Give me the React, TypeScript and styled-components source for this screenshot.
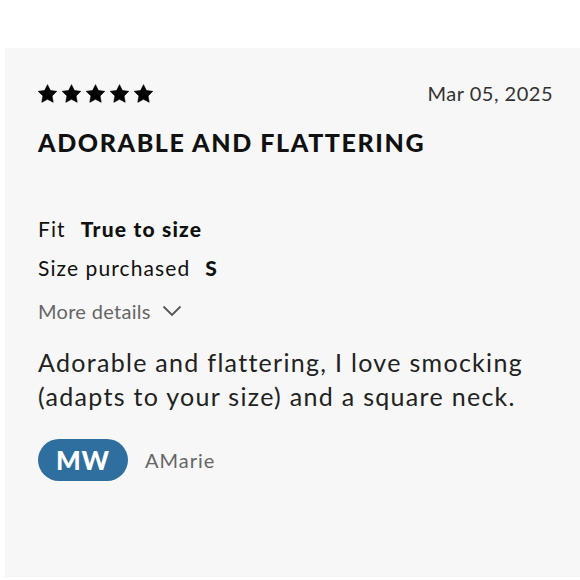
import React from "react";
import styled, { createGlobalStyle } from "styled-components";

const Global = createGlobalStyle`
  html, body { margin: 0; padding: 0; background: #ffffff; }
  body { font-family: Lato, "Open Sans", sans-serif; }
`;

const Card = styled.section`
  margin: 48px 0 0 5px;
  height: 529px;
  box-sizing: border-box;
  background: #f7f7f7;
  padding: 30px 27px 0 33px;
  display: flex;
  flex-direction: column;
`;

const TopRow = styled.div`
  display: flex;
  justify-content: space-between;
  align-items: center;
  height: 30px;
`;

const Stars = styled.div`
  display: flex;
  gap: 5px;
`;

const Date = styled.span`
  font-size: 20px;
  color: #333;
  letter-spacing: 0.5px;
`;

const Title = styled.h2`
  margin: 18px 0 0;
  font-size: 25px;
  font-weight: 900;
  letter-spacing: 1.6px;
  color: #111;
  line-height: 32px;
`;

const Details = styled.div`
  margin-top: 56px;
  display: flex;
  flex-direction: column;
  gap: 10px;
`;

const DetailRow = styled.div`
  display: flex;
  align-items: baseline;
  gap: 15px;
  font-size: 21px;
  color: #111;
  line-height: 29px;
  letter-spacing: 1.1px;
`;

const Value = styled.b`
  font-weight: 900;
  letter-spacing: 1.2px;
`;

const More = styled.button`
  margin-top: 15px;
  display: flex;
  align-items: center;
  gap: 11px;
  padding: 0;
  border: none;
  background: none;
  font-family: inherit;
  font-size: 20px;
  letter-spacing: 0.3px;
  color: #666;
  line-height: 28px;
  cursor: pointer;
`;

const Body = styled.p`
  margin: 20px 0 0;
  font-size: 25px;
  line-height: 34px;
  color: #222;
  letter-spacing: 1.3px;
`;

const Author = styled.div`
  margin-top: 26px;
  display: flex;
  align-items: center;
  gap: 17px;
`;

const Badge = styled.span`
  width: 90px;
  height: 42px;
  border-radius: 21px;
  background: #2f6f9f;
  color: #fff;
  display: flex;
  align-items: center;
  justify-content: center;
  font-size: 26px;
  font-weight: 900;
  letter-spacing: 1px;
`;

const Name = styled.span`
  font-size: 20px;
  color: #666;
  letter-spacing: 1px;
`;

const Star = () => (
  <svg width="19" height="19" viewBox="0 0 24 24">
    <path
      d="M12 .8l3.6 7.4 8.1 1.1-5.9 5.7 1.4 8.1L12 19.3l-7.2 3.8 1.4-8.1L.3 9.3l8.1-1.1z"
      fill="#000"
      stroke="#000"
      strokeWidth="0.8"
      strokeLinejoin="round"
    />
  </svg>
);

export default function App() {
  return (
    <>
      <Global />
      <Card>
        <TopRow>
          <Stars>
            {[0, 1, 2, 3, 4].map((i) => (
              <Star key={i} />
            ))}
          </Stars>
          <Date>Mar 05, 2025</Date>
        </TopRow>
        <Title>ADORABLE AND FLATTERING</Title>
        <Details>
          <DetailRow>
            Fit <Value>True to size</Value>
          </DetailRow>
          <DetailRow>
            Size purchased <Value>S</Value>
          </DetailRow>
        </Details>
        <More>
          More details
          <svg width="20" height="12" viewBox="0 0 20 12">
            <path d="M1.5 1.5L10 10l8.5-8.5" fill="none" stroke="#555" strokeWidth="1.8" />
          </svg>
        </More>
        <Body>
          Adorable and flattering, I love smocking (adapts to your size) and a square neck.
        </Body>
        <Author>
          <Badge>MW</Badge>
          <Name>AMarie</Name>
        </Author>
      </Card>
    </>
  );
}
